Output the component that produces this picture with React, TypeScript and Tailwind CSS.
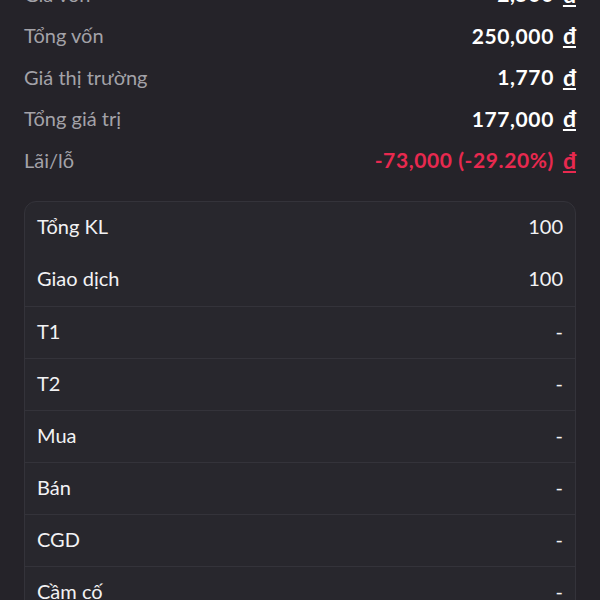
const summary = [
  { label: "Giá vốn", value: "2,500" },
  { label: "Tổng vốn", value: "250,000" },
  { label: "Giá thị trường", value: "1,770" },
  { label: "Tổng giá trị", value: "177,000" },
  { label: "Lãi/lỗ", value: "-73,000 (-29.20%)", loss: true },
];

const details = [
  { label: "Tổng KL", value: "100" },
  { label: "Giao dịch", value: "100" },
  { label: "T1", value: "-" },
  { label: "T2", value: "-" },
  { label: "Mua", value: "-" },
  { label: "Bán", value: "-" },
  { label: "CGD", value: "-" },
  { label: "Cầm cố", value: "-" },
];

export default function App() {
  return (
    <div
      className="w-[600px] h-[600px] overflow-hidden bg-[#252329] text-white"
      style={{ fontFamily: '"Lato", "Noto Sans", sans-serif' }}
    >
      <div className="px-6 -mt-[27px]">
        {summary.map((row) => (
          <div key={row.label} className="flex items-center justify-between h-[41.5px]">
            <span className="text-[20px] text-[#a3a2a8]">{row.label}</span>
            <span
              className={`flex items-center gap-[9px] text-[21px] tracking-[0.6px] font-bold ${
                row.loss ? "text-[#e8294f]" : "text-white"
              }`}
            >
              {row.value}
              <span className="underline text-[23px] tracking-normal">đ</span>
            </span>
          </div>
        ))}

        <div className="mt-5 rounded-xl border border-[#34333a] bg-[#28272d] overflow-hidden">
          {details.map((row, idx) => (
            <div
              key={row.label}
              className={`flex items-center justify-between h-[52px] px-3 pb-[3px] ${
                idx > 1 ? "border-t border-[#34333a]" : ""
              }`}
            >
              <span className="text-[20px] text-[#f2f2f4]">{row.label}</span>
              <span className="text-[20px] text-[#f2f2f4]">{row.value}</span>
            </div>
          ))}
        </div>
      </div>
    </div>
  );
}
